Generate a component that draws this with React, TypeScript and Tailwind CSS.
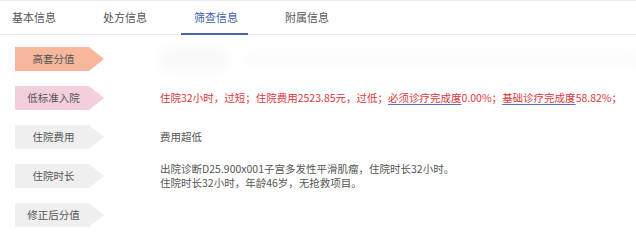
import React from 'react';

// Tabs across the top
const tabs = ['基本信息', '处方信息', '筛查信息', '附属信息'];

interface Row {
  label: string;
  tagClass: string;
  content: React.ReactNode;
}

const rows: Row[] = [
  {
    label: '高套分值',
    tagClass: 'bg-[#f6b79c]',
    content: (
      <div className="flex items-center gap-3 blur-[6px] opacity-30">
        <div className="h-[26px] w-[70px] rounded-full bg-[#e9e9e9]" />
        <div className="h-[12px] w-[400px] rounded bg-[#f0f0f0]" />
      </div>
    ),
  },
  {
    label: '低标准入院',
    tagClass: 'bg-[#f3cfde]',
    content: (
      <p className="text-[#d9363b]">
        住院32小时，过短；住院费用2523.85元，过低；
        <span className="underline decoration-[#5b6fbf] underline-offset-2">必须诊疗完成度</span>
        0.00%；
        <span className="underline decoration-[#5b6fbf] underline-offset-2">基础诊疗完成度</span>
        58.82%；
      </p>
    ),
  },
  {
    label: '住院费用',
    tagClass: 'bg-[#efefef]',
    content: <p className="text-[#555]">费用超低</p>,
  },
  {
    label: '住院时长',
    tagClass: 'bg-[#efefef]',
    content: (
      <p className="text-[#555] leading-[14px]">
        出院诊断D25.900x001子宫多发性平滑肌瘤，住院时长32小时。
        <br />
        住院时长32小时，年龄46岁，无抢救项目。
      </p>
    ),
  },
  {
    label: '修正后分值',
    tagClass: 'bg-[#efefef]',
    content: null,
  },
];

export default function App() {
  return (
    <div
      className="w-[636px] h-[245px] bg-white overflow-hidden text-[10.5px]"
      style={{ fontFamily: '"Microsoft YaHei", "Noto Sans CJK SC", sans-serif' }}
    >
      {/* tab bar */}
      <div className="border-t border-[#ececec] border-b flex h-[35px] pl-[12px]">
        {tabs.map((tab, i) => (
          <div
            key={tab}
            className={`relative flex items-center text-[11px] w-[91px] ${i === 2 ? 'text-[#3b5ea8]' : 'text-[#555]'}`}
          >
            {tab}
            {i === 2 && <div className="absolute bottom-[-1px] left-[-13px] w-[67px] h-[2px] bg-[#4b65a8]" />}
          </div>
        ))}
      </div>

      {/* screening rows */}
      <div className="flex flex-col gap-[15px] pt-[12px] pl-[15px]">
        {rows.map((row) => (
          <div key={row.label} className="flex items-center h-[24px]">
            <div
              className={`${row.tagClass} w-[89px] h-[24px] flex items-center justify-center text-[#555] pr-[12px] shrink-0`}
              style={{ clipPath: 'polygon(0 0, 74px 0, 100% 50%, 74px 100%, 0 100%)' }}
            >
              {row.label}
            </div>
            <div className="ml-[56px] whitespace-nowrap">{row.content}</div>
          </div>
        ))}
      </div>
    </div>
  );
}
